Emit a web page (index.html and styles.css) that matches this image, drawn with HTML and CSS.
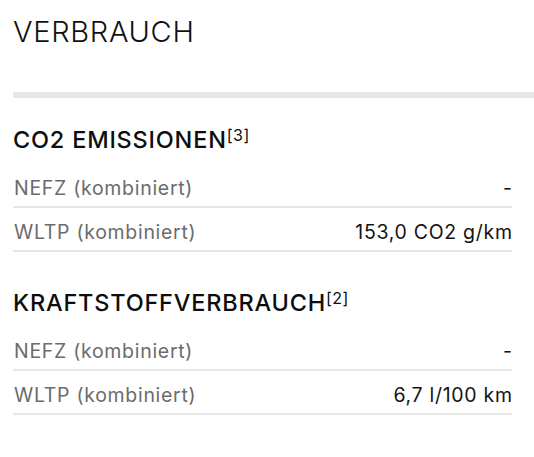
FILE: index.html
```html
<!DOCTYPE html>
<html lang="de">
<head>
<meta charset="utf-8">
<title>Verbrauch</title>
<link rel="stylesheet" href="styles.css">
</head>
<body>
<div class="page">
  <h1 class="title">VERBRAUCH</h1>
  <div class="bar"></div>

  <section class="section">
    <h2 class="heading">CO2 EMISSIONEN<sup class="ref">[3]</sup></h2>
    <div class="rows">
      <div class="row"><span class="label">NEFZ (kombiniert)</span><span class="value">-</span></div>
      <div class="row"><span class="label">WLTP (kombiniert)</span><span class="value">153,0 CO2 g/km</span></div>
    </div>
  </section>

  <section class="section section-second">
    <h2 class="heading">KRAFTSTOFFVERBRAUCH<sup class="ref">[2]</sup></h2>
    <div class="rows">
      <div class="row"><span class="label">NEFZ (kombiniert)</span><span class="value">-</span></div>
      <div class="row"><span class="label">WLTP (kombiniert)</span><span class="value">6,7 l/100 km</span></div>
    </div>
  </section>
</div>
</body>
</html>
```

FILE: styles.css
```css
html, body {
  margin: 0;
  padding: 0;
  background: #ffffff;
}

body {
  font-family: Inter, "Noto Sans", "Liberation Sans", sans-serif;
  color: #111111;
}

.page {
  padding: 14px 0 0 13px;
}

.title {
  margin: 0;
  font-size: 29px;
  line-height: 36px;
  font-weight: 300;
  color: #111111;
  letter-spacing: 0.7px;
}

.bar {
  margin-top: 42px;
  height: 6px;
  background: #e6e6e6;
}

.section {
  margin-top: 28px;
  padding-right: 22px;
}

.section-second {
  margin-top: 37px;
}

.heading {
  margin: 0 0 10px 0;
  font-size: 23.5px;
  line-height: 28px;
  font-weight: 500;
  letter-spacing: 0.8px;
  color: #0d0d0d;
}

.ref {
  font-size: 16px;
  line-height: 0;
  vertical-align: 7px;
  font-weight: 400;
  letter-spacing: 0.5px;
  margin-left: 0;
}

.row {
  display: flex;
  justify-content: space-between;
  align-items: baseline;
  padding: 11.5px 0 6.5px 1px;
  line-height: 24px;
  font-size: 19.5px;
  letter-spacing: 0.7px;
  border-bottom: 2px solid #e6e6e6;
}

.label {
  color: #6b6b6b;
}

.value {
  color: #141414;
  margin-right: -0.7px;
}
```
